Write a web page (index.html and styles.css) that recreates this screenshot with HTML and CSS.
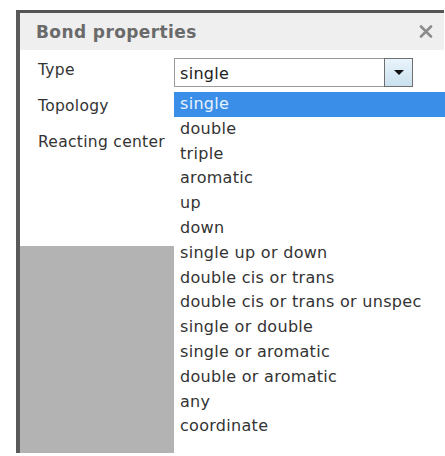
FILE: index.html
```html
<!DOCTYPE html>
<html lang="en">
<head>
<meta charset="utf-8">
<title>Bond properties</title>
<link rel="stylesheet" href="styles.css">
</head>
<body>
<div class="dialog">
  <div class="titlebar">
    <span class="title">Bond properties</span>
    <svg class="close" width="14" height="13" viewBox="0 0 14 13"><path d="M2 1.5l10 10M12 1.5l-10 10" stroke="#8c8c8c" stroke-width="2.6" stroke-linecap="round"/></svg>
  </div>
  <div class="form">
    <label class="label">Type</label>
    <div class="select">
      <span class="value">single</span>
      <span class="arrow"><svg width="12" height="7" viewBox="0 0 12 7"><path d="M1 1h10l-5 5z" fill="#111"/></svg></span>
    </div>
    <label class="label">Topology</label>
    <div></div>
    <label class="label">Reacting center</label>
    <div></div>
  </div>
  <div class="backdrop"></div>
</div>
<ul class="options">
  <li class="option selected">single</li>
  <li class="option">double</li>
  <li class="option">triple</li>
  <li class="option">aromatic</li>
  <li class="option">up</li>
  <li class="option">down</li>
  <li class="option">single up or down</li>
  <li class="option">double cis or trans</li>
  <li class="option">double cis or trans or unspec</li>
  <li class="option">single or double</li>
  <li class="option">single or aromatic</li>
  <li class="option">double or aromatic</li>
  <li class="option">any</li>
  <li class="option">coordinate</li>
</ul>
</body>
</html>
```
FILE: styles.css
```css
html, body {
  margin: 0;
  padding: 0;
  background: #fff;
}

body {
  width: 445px;
  height: 456px;
  overflow: hidden;
  position: relative;
  font-family: "DejaVu Sans", Verdana, sans-serif;
  color: #333;
}

.dialog {
  margin: 10px 0 0 16px;
  width: 424px;
  height: 440px;
  border-top: 3px solid #555;
  border-left: 4px solid #5a5a5a;
  display: flex;
  flex-direction: column;
}

.titlebar {
  height: 37px;
  background: #efefef;
  display: flex;
  align-items: center;
  justify-content: space-between;
  padding: 0 11px 0 16px;
}

.title {
  font-weight: bold;
  font-size: 17px;
  letter-spacing: 0.4px;
  color: #6a6a6a;
}

.form {
  background: #fff;
  height: 196px;
  box-sizing: border-box;
  padding: 8px 0 0 18px;
  display: grid;
  grid-template-columns: 136px 239px;
  grid-auto-rows: 36px;
  align-content: start;
  align-items: start;
}

.label {
  font-size: 15.5px;
  letter-spacing: 0.3px;
  line-height: 18px;
  padding-top: 3px;
  color: #333;
}

.select {
  height: 29px;
  box-sizing: border-box;
  border: 1px solid #9a9a9a;
  display: flex;
  align-items: center;
  justify-content: space-between;
  background: #fff;
}

.value {
  font-size: 16px;
  letter-spacing: 0.3px;
  padding-left: 5px;
  padding-top: 1px;
  color: #222;
}

.arrow {
  width: 29px;
  height: 29px;
  margin: -1px -1px -1px 0;
  box-sizing: border-box;
  border: 1px solid #6f6f6f;
  background: linear-gradient(#eaf4fb, #c9e0ee);
  display: flex;
  align-items: center;
  justify-content: center;
}

.backdrop {
  flex: 1;
  background: #b3b3b3;
}

.options {
  position: absolute;
  left: 174px;
  top: 88px;
  right: 0;
  bottom: 0;
  margin: 0;
  padding: 4px 0 0 0;
  list-style: none;
  background: #fff;
}

.option {
  height: 24.8px;
  line-height: 24.8px;
  font-size: 16px;
  letter-spacing: 0.3px;
  padding-left: 6px;
  color: #333;
}

.option.selected {
  background: #3b8ee8;
  color: #e8f2ff;
}
```
